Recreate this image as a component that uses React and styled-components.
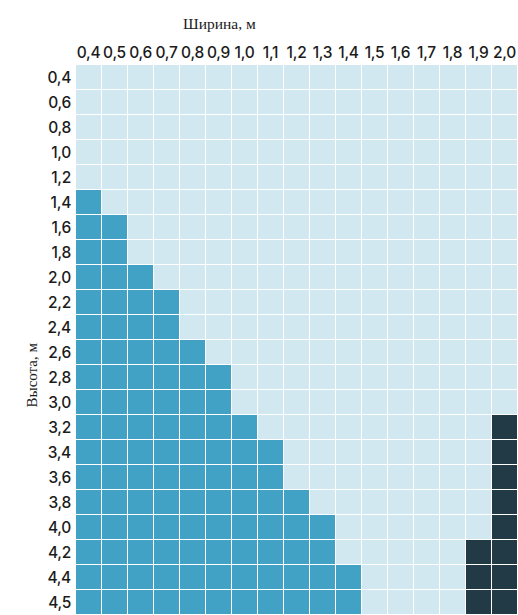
import React from "react";
import styled, { createGlobalStyle } from "styled-components";

const GlobalStyle = createGlobalStyle`
  html, body {
    margin: 0;
    padding: 0;
    background: #fff;
    overflow: hidden;
  }
`;

const widths = ["0,4", "0,5", "0,6", "0,7", "0,8", "0,9", "1,0", "1,1", "1,2", "1,3", "1,4", "1,5", "1,6", "1,7", "1,8", "1,9", "2,0"];

// height label, number of "standard" cells from the left, dark cells from the right
const rows = [
  ["0,4", 0, 0],
  ["0,6", 0, 0],
  ["0,8", 0, 0],
  ["1,0", 0, 0],
  ["1,2", 0, 0],
  ["1,4", 1, 0],
  ["1,6", 2, 0],
  ["1,8", 2, 0],
  ["2,0", 3, 0],
  ["2,2", 4, 0],
  ["2,4", 4, 0],
  ["2,6", 5, 0],
  ["2,8", 6, 0],
  ["3,0", 6, 0],
  ["3,2", 7, 1],
  ["3,4", 8, 1],
  ["3,6", 8, 1],
  ["3,8", 9, 1],
  ["4,0", 10, 1],
  ["4,2", 10, 2],
  ["4,4", 11, 2],
  ["4,5", 11, 2],
];

const colors = {
  empty: "#d2e8f0",
  fill: "#42a2c6",
  dark: "#223a45",
};

const Page = styled.div`
  width: 518px;
  height: 615px;
  overflow: hidden;
  font-family: Inter, "Noto Sans", sans-serif;
  color: #1b1b1b;
`;

const Title = styled.div`
  height: 40px;
  padding-left: 183px;
  box-sizing: border-box;
  padding-top: 14px;
  font-family: "Liberation Serif", "DejaVu Serif", serif;
  font-size: 15.5px;
  line-height: 20px;
  color: #1b1b1b;
`;

const Table = styled.div`
  display: grid;
  grid-template-columns: 44px 30px repeat(17, 25px);
  grid-auto-rows: 24px;
  gap: 1px;
`;

const ColLabel = styled.div`
  display: flex;
  align-items: center;
  justify-content: center;
  font-size: 15.5px;
  font-weight: 500;
  letter-spacing: -0.3px;
  white-space: nowrap;
`;

const RowLabel = styled.div`
  grid-column: 2;
  display: flex;
  align-items: center;
  justify-content: flex-end;
  padding-right: 4px;
  font-size: 15.5px;
  font-weight: 500;
  letter-spacing: -0.3px;
`;

const AxisCell = styled.div`
  grid-column: 1;
  grid-row: 2 / span 22;
  display: flex;
  justify-content: flex-end;
  align-items: flex-start;
  padding-right: 6px;
  padding-top: 278px;
`;

const AxisText = styled.span`
  writing-mode: vertical-rl;
  transform: rotate(180deg);
  font-family: "Liberation Serif", "DejaVu Serif", serif;
  font-size: 15px;
  line-height: 12px;
  white-space: nowrap;
`;

const Cell = styled.div`
  background: ${(p) => colors[p.$kind]};
`;

export default function App() {
  return (
    <Page>
      <GlobalStyle />
      <Title>Ширина, м</Title>
      <Table>
        <div />
        <div />
        {widths.map((w) => (
          <ColLabel key={w}>{w}</ColLabel>
        ))}
        <AxisCell>
          <AxisText>Высота, м</AxisText>
        </AxisCell>
        {rows.map(([h, filled, dark]) => (
          <React.Fragment key={h}>
            <RowLabel>{h}</RowLabel>
            {widths.map((w, i) => {
              let kind = "empty";
              if (i < filled) kind = "fill";
              else if (i >= widths.length - dark) kind = "dark";
              return <Cell key={w} $kind={kind} />;
            })}
          </React.Fragment>
        ))}
      </Table>
    </Page>
  );
}
